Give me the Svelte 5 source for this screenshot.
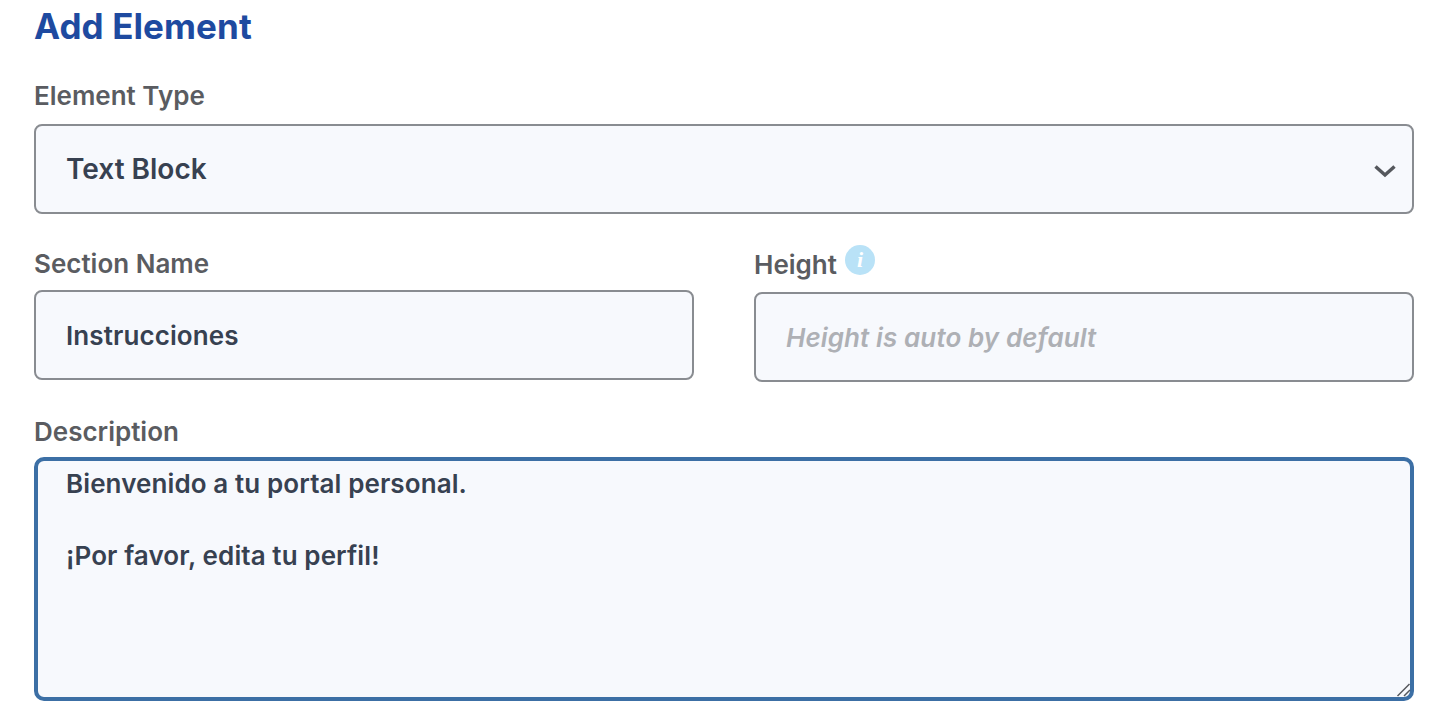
<script>
  let elementType = $state('Text Block');
  let sectionName = $state('Instrucciones');
  let height = $state('');
  let description = $state('Bienvenido a tu portal personal.\n\n¡Por favor, edita tu perfil!');
</script>

<form class="form" onsubmit={(e) => e.preventDefault()}>
  <h2 class="title">Add Element</h2>

  <div class="field">
    <label class="label" for="type">Element Type</label>
    <div class="select-wrap">
      <select id="type" class="control select" bind:value={elementType}>
        <option>Text Block</option>
        <option>Image</option>
        <option>Video</option>
      </select>
      <svg class="chevron" viewBox="0 0 22 14" width="22" height="14" aria-hidden="true">
        <path d="M1.5 2.5 L11 11 L20.5 2.5" fill="none" stroke="#55585d" stroke-width="3.5" />
      </svg>
    </div>
  </div>

  <div class="row">
    <div class="field">
      <label class="label" for="name">Section Name</label>
      <input id="name" class="control" type="text" bind:value={sectionName} />
    </div>
    <div class="field">
      <div class="label-row">
        <label class="label" for="height">Height</label>
        <span class="info">i</span>
      </div>
      <input id="height" class="control" type="text" placeholder="Height is auto by default" bind:value={height} />
    </div>
  </div>

  <div class="field">
    <label class="label" for="desc">Description</label>
    <div class="area-wrap">
      <textarea id="desc" class="control area" bind:value={description}></textarea>
      <svg class="grip" viewBox="0 0 16 14" width="16" height="14" aria-hidden="true">
        <path d="M1.5 13 L13.5 1 M8 13 L14 7" fill="none" stroke="#55585d" stroke-width="1.5" />
      </svg>
    </div>
  </div>
</form>

<style>
  :global(body) {
    background: #fff;
    font-family: Inter, "Liberation Sans", sans-serif;
  }

  .form {
    display: flex;
    flex-direction: column;
    gap: 33px;
    padding: 6px 33px 0 34px;
  }

  .title {
    margin: 0;
    font-size: 35px;
    line-height: 40px;
    font-weight: 700;
    letter-spacing: 0.1px;
    color: #1e4aa0;
  }

  .field {
    display: flex;
    flex-direction: column;
  }

  .label {
    display: block;
    font-size: 26px;
    line-height: 34px;
    font-weight: 600;
    color: #5a5c61;
    margin-bottom: 9px;
  }

  .label-row {
    display: flex;
    align-items: flex-start;
    gap: 8px;
    height: 44px;
    padding-top: 3px;
    margin-top: -2px;
  }

  .info {
    width: 30px;
    height: 30px;
    margin-top: -3px;
    border-radius: 50%;
    background: #b9e2f7;
    color: #fff;
    font-family: "Liberation Serif", serif;
    font-style: italic;
    font-weight: 700;
    font-size: 22px;
    line-height: 30px;
    text-align: center;
  }

  .control {
    width: 100%;
    box-sizing: border-box;
    height: 90px;
    padding: 0 30px;
    border: 2px solid #898c91;
    border-radius: 8px;
    background: #f7f9fd;
    font-family: inherit;
    font-size: 26px;
    font-weight: 600;
    letter-spacing: 0.1px;
    color: #374151;
    outline: none;
  }

  .control::placeholder {
    color: #aeb0b5;
    font-style: italic;
    opacity: 1;
  }

  .select-wrap {
    position: relative;
    margin-top: 2px;
  }

  .select {
    appearance: none;
    display: block;
    font-size: 28px;
    letter-spacing: 0;
  }

  .chevron {
    position: absolute;
    right: 18px;
    top: 40px;
    pointer-events: none;
  }

  .row {
    display: grid;
    grid-template-columns: 1fr 1fr;
    column-gap: 60px;
  }

  .area-wrap {
    position: relative;
    margin-top: -1px;
  }

  .area {
    display: block;
    height: 244px;
    padding: 5px 28px;
    border: 4px solid #3c6fa5;
    border-radius: 10px;
    line-height: 36px;
    resize: vertical;
  }

  .area::-webkit-resizer {
    background: transparent;
  }

  .grip {
    position: absolute;
    right: 2px;
    bottom: 4px;
    pointer-events: none;
  }
</style>
